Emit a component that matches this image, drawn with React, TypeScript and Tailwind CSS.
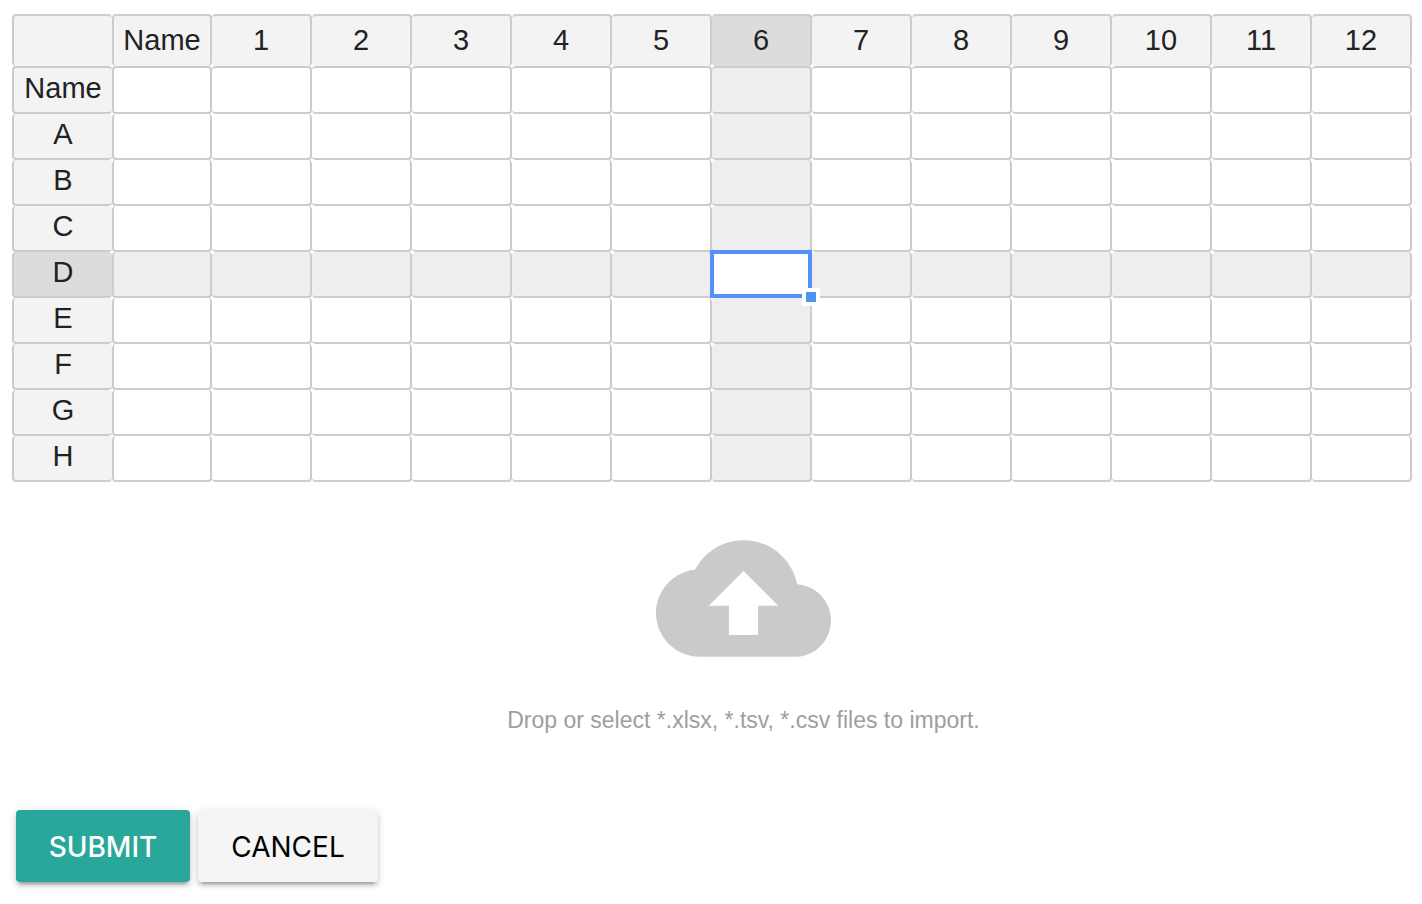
import { Fragment } from 'react';

const columns = ['Name', '1', '2', '3', '4', '5', '6', '7', '8', '9', '10', '11', '12'];
const rows = ['Name', 'A', 'B', 'C', 'D', 'E', 'F', 'G', 'H'];
const selected = { column: '6', row: 'D' };

const headerBase = 'border-[#cccccc] rounded-[4px] p-0 text-center align-top font-normal';

function columnHeaderClass(column: string, index: number) {
  return [
    headerBase,
    'h-[52px] border-t-2 border-r-2 pt-1',
    index === 0 ? 'border-l-2' : '',
    column === selected.column ? 'bg-[#dcdcdc]' : 'bg-[#f3f3f3]',
  ].join(' ');
}

function rowHeaderClass(row: string, index: number) {
  return [
    headerBase,
    'border-l-2 border-b-2',
    index === 0 ? 'h-[48px] border-t-2' : 'h-[46px]',
    row === selected.row ? 'bg-[#dcdcdc]' : 'bg-[#f3f3f3]',
  ].join(' ');
}

function cellClass(column: string, row: string, columnIndex: number, rowIndex: number) {
  const current = column === selected.column && row === selected.row;
  const highlighted = column === selected.column || row === selected.row;
  return [
    'rounded-[4px] border-r-2 border-b-2 border-[#cccccc] p-0',
    columnIndex === 0 ? 'border-l-2' : '',
    rowIndex === 0 ? 'border-t-2' : '',
    current ? 'relative bg-white' : highlighted ? 'bg-[#eeeeee]' : 'bg-white',
  ].join(' ');
}

function Selection() {
  return (
    <Fragment>
      <div className="absolute -inset-0.5 border-4 border-[#5292f7]" />
      <div className="absolute -right-2.5 -bottom-2.5 size-[18px] border-4 border-white bg-[#5292f7]" />
    </Fragment>
  );
}

function PlateGrid() {
  return (
    <table className="w-full table-fixed border-separate border-spacing-0 text-[29px] leading-10 text-[#222222]">
      <thead>
        <tr>
          <td className="h-[52px] rounded-[4px] border-t-2 border-l-2 border-[#cccccc] bg-[#f3f3f3] p-0" />
          {columns.map((column, index) => (
            <th key={column} scope="col" className={columnHeaderClass(column, index)}>
              {column}
            </th>
          ))}
        </tr>
      </thead>
      <tbody>
        {rows.map((row, rowIndex) => (
          <tr key={row}>
            <th scope="row" className={rowHeaderClass(row, rowIndex)}>
              {row}
            </th>
            {columns.map((column, columnIndex) => (
              <td key={column} className={cellClass(column, row, columnIndex, rowIndex)}>
                {column === selected.column && row === selected.row && <Selection />}
              </td>
            ))}
          </tr>
        ))}
      </tbody>
    </table>
  );
}

function FileDrop() {
  return (
    <div className="mt-[29px] flex justify-center pl-[63px]">
      <label htmlFor="import-file" className="relative flex cursor-pointer flex-col items-center gap-[18px]">
        <svg viewBox="0 0 24 24" className="size-[175px]" fill="#cacaca" aria-hidden="true">
          <path
            fillRule="evenodd"
            d="M19.35 10.04C18.67 6.59 15.64 4 12 4 9.11 4 6.6 5.64 5.35 8.04 2.34 8.36 0 10.91 0 14c0 3.31 2.69 6 6 6h13c2.76 0 5-2.24 5-5 0-2.64-2.05-4.78-4.65-4.96zM14 13v4h-4v-4H7.24L12 8.22 16.76 13H14z"
          />
        </svg>
        <span className="text-[23px] leading-8 text-[#9e9e9e]">
          Drop or select *.xlsx, *.tsv, *.csv files to import.
        </span>
        <input id="import-file" type="file" accept=".xlsx,.tsv,.csv" className="sr-only" />
      </label>
    </div>
  );
}

const buttonBase =
  "h-[72px] cursor-pointer rounded-[4px] px-8 pt-0.5 font-['Inter','Liberation_Sans',sans-serif] text-[28px] shadow-[0_4px_4px_0_rgba(0,0,0,0.14),0_2px_10px_0_rgba(0,0,0,0.12),0_6px_2px_-4px_rgba(0,0,0,0.2)]";

export default function App() {
  return (
    <main className="bg-white pt-3.5 pr-2.5 pb-5 pl-3 font-['Liberation_Sans',Arial,sans-serif]">
      <PlateGrid />
      <FileDrop />
      <div className="mt-[74px] flex gap-2 pl-1">
        <button type="submit" className={`${buttonBase} min-w-[174px] bg-[#28a79a] font-medium text-white`}>
          SUBMIT
        </button>
        <button type="button" className={`${buttonBase} min-w-[180px] bg-[#f5f5f5] text-black`}>
          CANCEL
        </button>
      </div>
    </main>
  );
}
